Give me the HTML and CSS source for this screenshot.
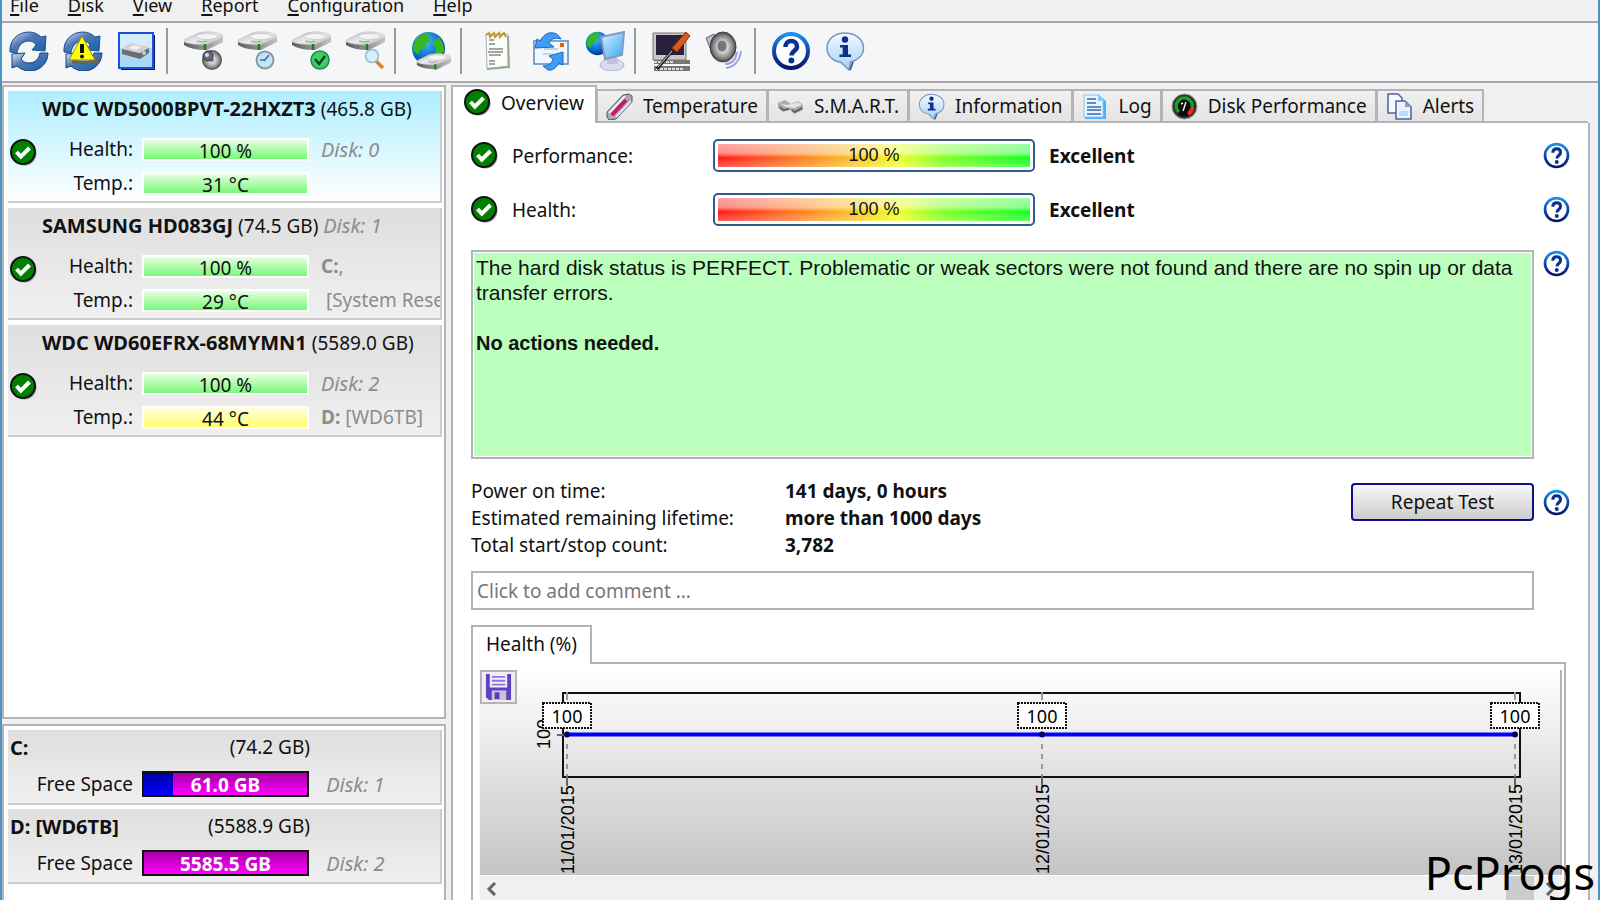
FILE: index.html
```html
<!DOCTYPE html>
<html lang="en">
  <head>
    <meta charset="UTF-8" />
    <meta name="viewport" content="width=device-width, initial-scale=1.0" />
    <title>Hard Disk Sentinel</title>
    <link rel="stylesheet" href="styles.css">
  </head>
  <body>
    <!-- shared icons -->
    <svg class="defs" width="0" height="0">
      <defs>
        <linearGradient id="gBlue" x1="0" y1="0" x2="1" y2="1">
          <stop offset="0" stop-color="#dfe8f8" />
          <stop offset="0.4" stop-color="#5078b4" />
          <stop offset="1" stop-color="#1060b0" />
        </linearGradient>
        <linearGradient id="gRing" x1="0" y1="0" x2="0" y2="1">
          <stop offset="0" stop-color="#1e90f0" />
          <stop offset="0.5" stop-color="#1048a8" />
          <stop offset="1" stop-color="#08186c" />
        </linearGradient>
        <linearGradient id="gBubble" x1="0" y1="0" x2="0" y2="1">
          <stop offset="0" stop-color="#f4faff" />
          <stop offset="1" stop-color="#a4d0f8" />
        </linearGradient>
        <linearGradient id="gDisk" x1="0" y1="0" x2="1" y2="1">
          <stop offset="0" stop-color="#b4b4b4" />
          <stop offset="0.5" stop-color="#ececec" />
          <stop offset="1" stop-color="#a8a8a8" />
        </linearGradient>
        <linearGradient id="gSide" x1="0" y1="0" x2="1" y2="0">
          <stop offset="0" stop-color="#5c5c5c" />
          <stop offset="0.6" stop-color="#989898" />
          <stop offset="1" stop-color="#c4c4c4" />
        </linearGradient>
        <radialGradient id="gGlobe" cx="0.4" cy="0.3" r="0.75">
          <stop offset="0" stop-color="#50b8ff" />
          <stop offset="0.6" stop-color="#0870d0" />
          <stop offset="1" stop-color="#042c78" />
        </radialGradient>
        <radialGradient id="gSpeaker" cx="0.5" cy="0.5" r="0.5">
          <stop offset="0" stop-color="#555" />
          <stop offset="0.3" stop-color="#ddd" />
          <stop offset="0.75" stop-color="#888" />
          <stop offset="1" stop-color="#444" />
        </radialGradient>
        <linearGradient id="gScreen" x1="0" y1="0" x2="1" y2="1">
          <stop offset="0" stop-color="#d8f4ff" />
          <stop offset="1" stop-color="#38a4f0" />
        </linearGradient>
      </defs>
      <symbol id="i-check" viewBox="0 0 27 27">
        <circle cx="14.500" cy="14.500" r="12" fill="#999" />
        <circle cx="13" cy="13" r="12" fill="#008000" stroke="#111" stroke-width="2" />
        <path d="M6.500 13l4.300 4.600L19.500 9" fill="none" stroke="#fff" stroke-width="4" />
      </symbol>
      <symbol id="i-help" viewBox="0 0 40 40">
        <circle cx="20" cy="20" r="17" fill="#fff" stroke="url(#gRing)" stroke-width="4" />
        <path d="M14.500 16c0-4 2.500-6 5.700-6s5.800 2 5.800 5.500c0 4.500-5.500 4.500-5.500 9" fill="none" stroke="#0c2f92" stroke-width="4.500" />
        <circle cx="20.400" cy="29.500" r="3" fill="#0c2f92" />
      </symbol>
      <symbol id="i-info" viewBox="0 0 40 40">
        <path d="M20 2C10 2 2 8 2 17c0 8 6 13 14 14.500L24 39l1.500-8C33 29 38.500 24 38.500 17 38.500 8 30 2 20 2z" fill="url(#gBubble)" stroke="#7896bc" stroke-width="1.500" />
        <path d="M28 31l-3 8" stroke="#3c608c" stroke-width="2" />
        <circle cx="20" cy="8.500" r="3.200" fill="#0c308c" />
        <path d="M15 14h8v9.500h3V26H14.500v-2.500h3.200V16.500H15z" fill="#0c308c" />
      </symbol>
      <symbol id="i-refresh" viewBox="0 0 40 40">
        <path d="M1 21C0 9 9 1 20 1c5 0 9 2 12 5l5-1-1 15-13-1 4-5c-2-3-4-4-7-4-7 0-11 5-12 12z" fill="url(#gBlue)" stroke="#24508c" />
        <path d="M39 22c0 10-8 18-18 18-5 0-10-2-13-5l-5 2V23l13-1-4 6c2 3 5 4 8 4 6 0 10-4 11-10z" fill="url(#gBlue)" stroke="#18407c" />
      </symbol>
      <symbol id="i-disk" viewBox="0 0 40 20">
        <path d="M1 10Q10 13 22 12L40 6v5L24 19Q8 19 1 14z" fill="url(#gSide)" />
        <path d="M1 9L15 2q12-3 23 1 2 1 2 4L23 14Q9 14 1 11z" fill="url(#gDisk)" stroke="#b8b8b8" stroke-width=".5" />
        <ellipse cx="24" cy="5.500" rx="11" ry="3" fill="#f4f4f4" stroke="#c0c0c0" stroke-width=".7" />
        <path d="M14 10q6 2 10 0" fill="none" stroke="#999" />
        <path d="M22 13v6" stroke="#188018" stroke-width="2.500" />
      </symbol>
      <symbol id="i-globe" viewBox="0 0 34 34">
        <circle cx="17" cy="17" r="16" fill="url(#gGlobe)" />
        <path d="M5 8c4-5 10-7 14-6l-3 4 4 3-5 3-2 5-4 1-2 5-4-3c-2-4 0-9 2-12zM22 10l5-4c3 4 6 9 5 14l-4 4-5-4 2-4-4-2z" fill="#38b820" />
      </symbol>
    </svg>

    <nav class="menu">
      <button type="button"><u>F</u>ile</button>
      <button type="button"><u>D</u>isk</button>
      <button type="button"><u>V</u>iew</button>
      <button type="button"><u>R</u>eport</button>
      <button type="button"><u>C</u>onfiguration</button>
      <button type="button"><u>H</u>elp</button>
    </nav>

    <div class="toolbar">
      <button type="button" aria-label="Refresh">
        <svg viewBox="0 0 40 40"><use href="#i-refresh" /></svg>
      </button>
      <button type="button" aria-label="Refresh all">
        <svg viewBox="0 0 40 40">
          <use href="#i-refresh" />
          <path d="M9 31h25l-2-4" fill="none" stroke="#665" stroke-width="3" />
          <path d="M19 5L32 29H6z" fill="#ffff00" stroke="#8c8c20" stroke-width="1" />
          <path d="M19 13v9" stroke="#111" stroke-width="4" />
          <circle cx="19" cy="25.500" r="2" fill="#111" />
        </svg>
      </button>
      <button type="button" aria-label="Disk info">
        <svg viewBox="0 0 40 40">
          <rect x="4" y="4" width="34" height="35" fill="#081858" />
          <rect x="2" y="2" width="34" height="35" fill="#a8d8f8" stroke="#1c50dc" stroke-width="2" />
          <rect x="3" y="3" width="32" height="14" fill="#fff" opacity=".5" />
          <path d="M5 18l7 1 11 3 9-5v5l-9 6-18-5z" fill="#6c6c6c" />
          <path d="M5 18l9-6 18 4-10 6z" fill="#d0d0d0" />
          <path d="M11 17l6-3 8 2-6 3z" fill="#f0f0f0" />
          <circle cx="27" cy="22" r="2" fill="#ccc" />
        </svg>
      </button>
      <span class="sep"></span>
      <button type="button" aria-label="Acoustic">
        <svg viewBox="0 0 40 40">
          <use href="#i-disk" width="40" height="20" />
          <circle cx="29" cy="29" r="10" fill="url(#gSpeaker)" />
          <circle cx="25" cy="25" r="5" fill="#667" stroke="#334" />
          <circle cx="24" cy="24" r="2" fill="#dde" />
        </svg>
      </button>
      <button type="button" aria-label="Disk time">
        <svg viewBox="0 0 40 40">
          <use href="#i-disk" width="40" height="20" />
          <circle cx="28" cy="29" r="8.500" fill="#c0e4f8" stroke="#8c98a0" stroke-width="2" />
          <path d="M27 30l5-6M23 29h5" stroke="#4c6c90" stroke-width="1.500" />
        </svg>
      </button>
      <button type="button" aria-label="Disk test">
        <svg viewBox="0 0 40 40">
          <use href="#i-disk" width="40" height="20" />
          <circle cx="29" cy="29" r="9" fill="#40cc68" stroke="#189040" stroke-width="1.500" />
          <path d="M24 28l4 5 6-8" fill="none" stroke="#0c4820" stroke-width="2.500" />
        </svg>
      </button>
      <button type="button" aria-label="Surface test">
        <svg viewBox="0 0 40 40">
          <use href="#i-disk" width="40" height="20" />
          <path d="M31 30l7 7" stroke="#d88820" stroke-width="3.500" />
          <circle cx="27" cy="25" r="6.500" fill="#d4f0ff" stroke="#9cb4d0" stroke-width="1.500" />
        </svg>
      </button>
      <span class="sep"></span>
      <button type="button" aria-label="Online">
        <svg viewBox="0 0 40 40">
          <use href="#i-globe" x="0" y="0" width="35" height="35" />
          <use href="#i-disk" x="5" y="21" width="35" height="19" />
        </svg>
      </button>
      <span class="sep"></span>
      <button type="button" aria-label="Report">
        <svg viewBox="0 0 40 40">
          <path d="M9 3h22v32L10 38z" fill="#fcfcf8" stroke="#a4b4a4" />
          <path d="M31 5l1 31-22 2" fill="none" stroke="#98a898" stroke-width="2" />
          <path d="M9 4l3-2 1 4 4-4 1 4 4-4 1 4 4-4 2 4" fill="none" stroke="#c49830" stroke-width="2" />
          <path d="M12 9h5M12 13h6M12 18h14M11 21h15M12 24h12M12 30h6M12 33h6" stroke="#888" stroke-width="1.500" />
        </svg>
      </button>
      <button type="button" aria-label="Send mail">
        <svg viewBox="0 0 40 40">
          <path d="M3 10h34v23H3z" fill="#f0f8ff" stroke="#5888c0" stroke-width="1.500" />
          <path d="M13 18h14M12 23h10" stroke="#b0c4d8" stroke-width="1.500" />
          <rect x="29" y="12" width="4" height="4" fill="#e06020" />
          <path d="M4 17L6 8l3 2C13 3 18 1 22 2c4 0 6 3 8 6-6-2-10 0-12 4l5 4z" fill="#3c9cf8" stroke="#1c64c0" />
          <path d="M32 21v13l-4-2c-3 5-7 8-11 7l-5-4c6 0 9-3 10-7l-4-3z" fill="#3c9cf8" stroke="#1c64c0" />
        </svg>
      </button>
      <button type="button" aria-label="Network">
        <svg viewBox="0 0 40 40">
          <use href="#i-globe" x="0" y="0" width="25" height="25" />
          <ellipse cx="27" cy="34" rx="12" ry="6" fill="#dcdcf0" stroke="#b0b0d0" />
          <path d="M23 24h9l1 9H22z" fill="#c0c0e0" />
          <path d="M16 6l23-5-2 23-17 4z" fill="url(#gScreen)" stroke="#8498c4" stroke-width="2" />
        </svg>
      </button>
      <span class="sep"></span>
      <button type="button" aria-label="Configure">
        <svg viewBox="0 0 40 40">
          <path d="M2 2h33v27H2z" fill="#c8c8c8" stroke="#777" />
          <path d="M5 4h28v20H5z" fill="#28203c" />
          <path d="M3 29h36v4H3zM3 35h36v5H3z" fill="#777" />
          <path d="M3 31h20M5 38h28" stroke="#ddd" stroke-width="2" stroke-dasharray="3 1" />
          <path d="M22 19L6 38" stroke="#222" stroke-width="3" />
          <path d="M21 20L7 36" stroke="#ddd" stroke-width="1" />
          <path d="M35 1l4 4-13 16-5-4z" fill="#dc5818" stroke="#8c3008" />
        </svg>
      </button>
      <button type="button" aria-label="Sound">
        <svg viewBox="0 0 40 40">
          <path d="M1 7l8-4 4 16-8-2z" fill="#bcbcd8" stroke="#667" />
          <ellipse cx="18" cy="16" rx="13" ry="15" fill="url(#gSpeaker)" stroke="#444" />
          <ellipse cx="17" cy="15" rx="5" ry="6" fill="#777" stroke="#ccc" />
          <path d="M20 33c7 0 11-5 12-12M21 37c8-1 14-7 15-17" fill="none" stroke="#a0a0dc" stroke-width="2" />
        </svg>
      </button>
      <span class="sep"></span>
      <button type="button" aria-label="Help">
        <svg viewBox="0 0 40 40"><use href="#i-help" /></svg>
      </button>
      <button type="button" aria-label="About">
        <svg viewBox="0 0 40 40"><use href="#i-info" /></svg>
      </button>
    </div>

    <div class="window">
      <aside class="sidebar">
        <section class="panel disks">
          <div class="item selected">
            <p class="disk-title"><b>WDC WD5000BPVT-22HXZT3</b> (465.8 GB)</p>
            <div class="row">
              <svg class="status"><use href="#i-check" /></svg>
              <span class="label">Health:</span>
              <span class="bar">100 %</span>
              <i class="note">Disk: 0</i>
            </div>
            <div class="row">
              <span></span>
              <span class="label">Temp.:</span>
              <span class="bar">31 °C</span>
            </div>
          </div>
          <div class="item">
            <p class="disk-title"><b>SAMSUNG HD083GJ</b> (74.5 GB) <i class="note">Disk: 1</i></p>
            <div class="row">
              <svg class="status"><use href="#i-check" /></svg>
              <span class="label">Health:</span>
              <span class="bar">100 %</span>
              <span class="note"><b>C:</b>,</span>
            </div>
            <div class="row">
              <span></span>
              <span class="label">Temp.:</span>
              <span class="bar">29 °C</span>
              <span class="note">&nbsp;[System Reserved]</span>
            </div>
          </div>
          <div class="item">
            <p class="disk-title"><b>WDC WD60EFRX-68MYMN1</b> (5589.0 GB)</p>
            <div class="row">
              <svg class="status"><use href="#i-check" /></svg>
              <span class="label">Health:</span>
              <span class="bar">100 %</span>
              <i class="note">Disk: 2</i>
            </div>
            <div class="row">
              <span></span>
              <span class="label">Temp.:</span>
              <span class="bar warm">44 °C</span>
              <span class="note"><b>D:</b> [WD6TB]</span>
            </div>
          </div>
        </section>

        <section class="panel drives">
          <div class="item">
            <p class="drive-title"><b>C:</b><span>(74.2 GB)</span></p>
            <div class="row">
              <span class="label wide">Free Space</span>
              <span class="bar space"><span class="used" style="width: 18%"></span><b>61.0 GB</b></span>
              <i class="note">&nbsp;Disk: 1</i>
            </div>
          </div>
          <div class="item">
            <p class="drive-title"><b>D: [WD6TB]</b><span>(5588.9 GB)</span></p>
            <div class="row">
              <span class="label wide">Free Space</span>
              <span class="bar space"><b>5585.5 GB</b></span>
              <i class="note">&nbsp;Disk: 2</i>
            </div>
          </div>
        </section>
      </aside>

      <main class="main">
        <div class="tabs" role="tablist">
          <button class="tab active" type="button" role="tab" aria-selected="true">
            <svg viewBox="0 0 27 27"><use href="#i-check" /></svg>Overview
          </button>
          <button class="tab" type="button" role="tab">
            <svg viewBox="0 0 27 27">
              <path d="M1 19L17 2l6-1 3 2v6L10 26l-7 1-2-3z" fill="#a8a8b4" stroke="#555" />
              <path d="M3 20L19 3" stroke="#f0f0f4" stroke-width="2" />
              <path d="M6 22L20 7" stroke="#c81870" stroke-width="4" />
              <path d="M10 24L25 8" stroke="#e4e4ec" stroke-width="2" />
            </svg>Temperature
          </button>
          <button class="tab" type="button" role="tab">
            <svg viewBox="0 0 27 27">
              <path d="M1 10l7-3 6 4 7-3 5 4v5l-9 4-4-4-7 2-5-4z" fill="#aaa" />
              <path d="M2 10l7 2 6-1 6-2 4 3-8 3-8-1z" fill="#e4e4e4" />
              <path d="M3 14l3 3 6-1M15 17l3 2 7-4" fill="none" stroke="#555" stroke-width="1.500" />
            </svg>S.M.A.R.T.
          </button>
          <button class="tab" type="button" role="tab">
            <svg viewBox="0 0 27 27"><use href="#i-info" /></svg>Information
          </button>
          <button class="tab" type="button" role="tab">
            <svg viewBox="0 0 27 27">
              <path d="M3 3h15l6 5v18H3z" fill="#48b0fc" />
              <path d="M2 2h15l4 5v17H2z" fill="#e8f6ff" stroke="#80c4f8" />
              <path d="M16 1v7h7z" fill="#88ccfc" />
              <path d="M5 6h9M5 10h9M5 14h14M5 17h14M5 21h14" stroke="#3c64b0" stroke-width="1.500" />
            </svg>Log
          </button>
          <button class="tab" type="button" role="tab">
            <svg viewBox="0 0 27 27">
              <circle cx="13.500" cy="13.500" r="12.500" fill="#333" stroke="#999" />
              <circle cx="13.500" cy="13.500" r="10" fill="#0c0c0c" />
              <path d="M8 19a8 8 0 1 1 13-4" fill="none" stroke="#10a820" stroke-width="3.500" />
              <path d="M21 15c0 3-2 5-4 6" fill="none" stroke="#e82c18" stroke-width="4" />
              <path d="M12 18l3-9M10 11l2-1" stroke="#eee" stroke-width="1.500" />
            </svg>Disk Performance
          </button>
          <button class="tab" type="button" role="tab">
            <svg viewBox="0 0 27 27">
              <path d="M2 1h10l4 4v15H2z" fill="#f4faff" stroke="#4c60a0" stroke-width="1.500" />
              <path d="M10 8h9l6 6v12H10z" fill="#e8f4ff" stroke="#4c60a0" stroke-width="1.500" />
              <path d="M19 8v6h6z" fill="#88a0d0" />
              <path d="M13 18h9v5h-9z" fill="#b8dcf8" />
            </svg>Alerts
          </button>
        </div>

        <div class="content">
          <div class="score">
            <svg class="status"><use href="#i-check" /></svg>
            <span class="score-label">Performance:</span>
            <div class="gauge"><span>100 %</span></div>
            <b>Excellent</b>
            <button class="help" type="button" aria-label="Help"><svg viewBox="0 0 40 40"><use href="#i-help" /></svg></button>
          </div>
          <div class="score">
            <svg class="status"><use href="#i-check" /></svg>
            <span class="score-label">Health:</span>
            <div class="gauge"><span>100 %</span></div>
            <b>Excellent</b>
            <button class="help" type="button" aria-label="Help"><svg viewBox="0 0 40 40"><use href="#i-help" /></svg></button>
          </div>

          <div class="with-help">
            <div class="summary">
              <p>The hard disk status is PERFECT. Problematic or weak sectors were not found and there are no spin up or data transfer errors.</p>
              <p><b>No actions needed.</b></p>
            </div>
            <button class="help" type="button" aria-label="Help"><svg viewBox="0 0 40 40"><use href="#i-help" /></svg></button>
          </div>

          <div class="facts">
            <dl>
              <dt>Power on time:</dt>
              <dd>141 days, 0 hours</dd>
              <dt>Estimated remaining lifetime:</dt>
              <dd>more than 1000 days</dd>
              <dt>Total start/stop count:</dt>
              <dd>3,782</dd>
            </dl>
            <div class="repeat">
              <button class="repeat-button" type="button">Repeat Test</button>
              <button class="help" type="button" aria-label="Help"><svg viewBox="0 0 40 40"><use href="#i-help" /></svg></button>
            </div>
          </div>

          <input class="comment" type="text" placeholder="Click to add comment ..." aria-label="Comment" />

          <div class="chart-tabs">
            <button class="chart-tab" type="button">Health (%)</button>
          </div>
          <div class="chart">
            <div class="plot">
              <button class="save" type="button" aria-label="Save">
                <svg viewBox="0 0 30 30">
                  <path d="M2 1h26v27H5l-3-3z" fill="#6040c4" />
                  <path d="M6 1h18v14H6z" fill="#f4f0ff" />
                  <path d="M8 4h14M8 8h14M8 12h14" stroke="#8c74dc" stroke-width="2" />
                  <path d="M8 18h15v10H8z" fill="#c8c4dc" />
                  <path d="M11 20h5v7h-5z" fill="#5c38bc" />
                </svg>
              </button>
              <svg class="graph" viewBox="0 -2 1080 205">
                <rect x="83" y="21" width="957" height="84" fill="none" stroke="#111" stroke-width="2" />
                <g stroke="#999" stroke-width="2">
                  <path d="M87 20v8M562 20v8M1035 20v8" />
                  <path d="M87 72v32M562 72v32M1035 72v32" stroke-dasharray="5 5" />
                  <path d="M77 63h8M87 104v10M562 104v10M1035 104v10" stroke="#666" />
                </g>
                <text class="axis" transform="translate(70 77) rotate(-90)">100</text>
                <path d="M87 62.500H1035" stroke="#0000ff" stroke-width="4" />
                <g fill="#00005c">
                  <circle cx="87" cy="62.500" r="3" />
                  <circle cx="562" cy="62.500" r="3" />
                  <circle cx="1035" cy="62.500" r="3" />
                </g>
                <g fill="#fff" stroke="#111" stroke-width="2" stroke-dasharray="2 1">
                  <rect x="63" y="31" width="48" height="25" />
                  <rect x="538" y="31" width="48" height="25" />
                  <rect x="1011" y="31" width="48" height="25" />
                </g>
                <g class="value" text-anchor="middle">
                  <text x="87" y="51">100</text>
                  <text x="562" y="51">100</text>
                  <text x="1035" y="51">100</text>
                </g>
                <g class="axis">
                  <text transform="translate(94 202) rotate(-90)">11/01/2015</text>
                  <text transform="translate(569 202) rotate(-90)">12/01/2015</text>
                  <text transform="translate(1042 202) rotate(-90)">13/01/2015</text>
                </g>
              </svg>
            </div>
            <div class="scrollbar">
              <svg viewBox="0 0 12 14"><path d="M9 1L3 7l6 6" /></svg>
              <span class="thumb"></span>
              <svg viewBox="0 0 12 14"><path d="M3 1l6 6-6 6" /></svg>
            </div>
          </div>
        </div>
      </main>
    </div>

    <div class="watermark">PcProgs</div>
  </body>
</html>
```
FILE: styles.css
```css
:root {
  --window: #f0f0f0;
  --line: #b4b4b8;
  --note: #8c8c8c;
  --edge: #4c94c0;
  --sm: 18px;
  --md: 19px;
  --lg: 20px;
}
* {
  box-sizing: border-box;
}
body {
  margin: 0;
  height: 100vh;
  overflow: hidden;
  display: flex;
  flex-direction: column;
  border-left: 2px solid var(--edge);
  border-right: 2px solid var(--edge);
  background-color: var(--window);
  color: #111;
  font-family: "Noto Sans", sans-serif;
  font-size: var(--md);
}
p,
dl,
dd {
  margin: 0;
}
button {
  margin: 0;
  padding: 0;
  border: 0;
  background: none;
  color: inherit;
  font: inherit;
}
.defs {
  position: absolute;
}
.menu {
  flex: none;
  display: flex;
  height: 23px;
  padding-bottom: 11px;
  align-items: center;
  border-bottom: 2px solid #a8a8a8;
  font-size: var(--sm);
}
.menu button {
  padding: 0 15px 0 14px;
  line-height: 10px;
}
.menu button:first-child {
  padding-left: 8px;
}
.menu u {
  text-decoration-thickness: 2px;
  text-underline-offset: 2px;
}
.toolbar {
  flex: none;
  display: flex;
  align-items: center;
  height: 60px;
  padding-bottom: 2px;
  background-color: #f5f6f8;
  border-bottom: 2px solid #a8a8a8;
}
.toolbar button {
  width: 54px;
  height: 40px;
}
.toolbar svg {
  width: 40px;
  height: 40px;
  display: block;
  margin: 0 auto;
}
.sep {
  width: 2px;
  height: 46px;
  margin: 0 8px 0 2px;
  background-color: #999;
}
.window {
  flex: 1;
  min-height: 0;
  display: flex;
  gap: 5px;
  padding: 2px 8px 0 0;
}
.sidebar {
  width: 444px;
  display: flex;
  flex-direction: column;
  gap: 5px;
}
.panel {
  background-color: #fff;
  border: 2px solid var(--line);
  padding: 4px 2px 0 4px;
}
.disks {
  flex: 1;
}
.drives {
  height: 176px;
  border-bottom: 0;
}
.item {
  padding-left: 2px;
  overflow: hidden;
  white-space: nowrap;
  background: linear-gradient(#dedede, #f0f0f0);
  border-right: 2px solid #ccc;
  border-bottom: 2px solid #ccc;
}
.disks .item {
  height: 112px;
  margin-bottom: 5px;
}
.drives .item {
  height: 75px;
  margin-bottom: 4px;
}
.item.selected {
  background: linear-gradient(#aeeeff, #fff);
}
.disk-title {
  height: 41px;
  padding-left: 32px;
  line-height: 36px;
}
.disk-title b,
.drive-title b,
.item i {
  font-size: var(--lg);
}
.drive-title {
  display: flex;
  justify-content: space-between;
  width: 300px;
  height: 37px;
  line-height: 35px;
}
.row {
  display: grid;
  grid-template-columns: 27px 87px 167px 1fr;
  column-gap: 9px;
  align-items: center;
  height: 34px;
  line-height: 33px;
}
.status {
  width: 27px;
  height: 27px;
}
.row .status {
  align-self: end;
}
.label {
  text-align: right;
}
.label.wide {
  grid-column: 1 / 3;
}
.note {
  color: var(--note);
}
.row .note {
  padding-left: 3px;
}
.bar {
  height: 23px;
  line-height: 22px;
  text-align: center;
  border: 2px solid #fff;
  background: linear-gradient(#e8ffe0, #78f878);
}
.bar.warm {
  background: linear-gradient(#ffffe0, #ffff70);
}
.bar.space {
  position: relative;
  height: 26px;
  line-height: 24px;
  border-color: #111;
  color: #fff;
  background: linear-gradient(#a800a8, #ff00ff);
}
.bar.space b {
  position: relative;
}
.used {
  position: absolute;
  top: 0;
  bottom: 0;
  left: 0;
  background: linear-gradient(#0000a0, #0000ff);
}
.main {
  flex: 1;
  min-width: 0;
  display: flex;
  flex-direction: column;
}
.tabs {
  flex: none;
  display: flex;
  align-items: flex-end;
  height: 38px;
}
.tab {
  display: flex;
  align-items: center;
  gap: 10px;
  height: 34px;
  padding: 0 8px;
  background: linear-gradient(#f0f0f0, #e4e4e4);
  border: 2px solid var(--line);
  border-left-width: 1px;
  white-space: nowrap;
}
.tab svg {
  width: 27px;
  height: 27px;
}
.tab.active {
  position: relative;
  height: 38px;
  padding: 0 11px 5px;
  background: #fff;
  border-left-width: 2px;
  border-bottom: 0;
}
.content {
  flex: 1;
  min-height: 0;
  display: flex;
  flex-direction: column;
  padding: 16px 18px 0;
  background-color: #fff;
  border-left: 2px solid var(--line);
  border-right: 2px solid var(--line);
  position: relative;
}
/* top edge, open under the active tab */
.content::before {
  content: "";
  position: absolute;
  top: -2px;
  left: 144px;
  right: 0;
  height: 2px;
  background-color: var(--line);
}
.score {
  flex: none;
  display: flex;
  align-items: center;
  height: 33px;
  margin-bottom: 21px;
}
.score-label {
  width: 201px;
  margin-left: 14px;
}
.score b {
  flex: 1;
  margin-left: 14px;
}
.help {
  flex: none;
  width: 27px;
  height: 27px;
}
.help svg {
  display: block;
  width: 27px;
  height: 27px;
}
.gauge {
  width: 322px;
  height: 33px;
  padding: 3px;
  border: 2px solid #305c8c;
  border-radius: 5px;
}
.gauge span {
  display: block;
  height: 23px;
  line-height: 22px;
  text-align: center;
  font-family: "Liberation Sans", sans-serif;
  font-size: var(--sm);
  background: linear-gradient(rgba(255, 255, 255, 0.6), rgba(255, 255, 255, 0.5) 40%, rgba(255, 255, 255, 0) 60%, rgba(255, 255, 255, 0.3)),
    linear-gradient(90deg, #ff1818, #ff8c20 30%, #f0ff20 58%, #80ff20 72%, #10ff20);
}
.with-help {
  flex: none;
  display: flex;
  gap: 9px;
  align-items: flex-start;
  margin-top: 3px;
}
.summary {
  flex: 1;
  height: 209px;
  padding: 3px;
  line-height: 25px;
  font-family: "Liberation Sans", sans-serif;
  font-size: 21px;
  background-color: #bcffbc;
  border: 2px solid var(--line);
  box-shadow: inset 0 0 0 1px #fff;
}
.summary b {
  font-size: var(--lg);
}
.summary p + p {
  margin-top: 25px;
}
.facts {
  flex: none;
  display: flex;
  justify-content: space-between;
  margin-top: 19px;
}
.facts dl {
  display: grid;
  grid-template-columns: 314px auto;
  line-height: 27px;
}
.facts dd {
  font-weight: bold;
}
.repeat {
  display: flex;
  gap: 9px;
  align-items: center;
  height: 38px;
  margin-top: 5px;
}
.repeat-button {
  width: 183px;
  height: 38px;
  background: linear-gradient(#f8f8f8, #ccc);
  border: 2px solid #101088;
  border-radius: 4px;
}
.comment {
  flex: none;
  height: 39px;
  margin: 12px 36px 0 0;
  padding: 0 4px;
  border: 2px solid var(--line);
  font: inherit;
}
.comment::placeholder {
  color: #777;
}
.chart-tabs {
  flex: none;
  display: flex;
  margin-top: 15px;
}
.chart-tab {
  position: relative;
  width: 121px;
  height: 39px;
  margin-bottom: -2px;
  padding-bottom: 4px;
  background: #fff;
  border: 2px solid var(--line);
  border-bottom: 0;
}
.chart {
  flex: 1;
  min-height: 0;
  margin-right: 4px;
  padding: 6px 2px 0 7px;
  border: 2px solid var(--line);
  border-bottom: 0;
}
.plot {
  position: relative;
  background: linear-gradient(#fff, #c4c4c4);
  border-right: 2px solid var(--line);
}
.save {
  position: absolute;
  width: 37px;
  height: 34px;
  background-color: #eee;
  border: 2px solid var(--line);
}
.save svg {
  display: block;
  width: 29px;
  height: 29px;
  margin: auto;
}
.graph {
  display: block;
  width: 100%;
}
.axis {
  font-family: "Liberation Sans", sans-serif;
  font-size: var(--sm);
}
.value {
  font-size: var(--sm);
}
.scrollbar {
  display: flex;
  align-items: center;
  height: 26px;
  margin-top: 1px;
  padding: 0 6px;
  background-color: #f0f0f0;
}
.scrollbar svg {
  width: 12px;
  height: 14px;
  fill: none;
  stroke: #666;
  stroke-width: 3;
}
.thumb {
  width: 28px;
  height: 26px;
  margin: 0 10px 0 auto;
  background-color: #ccc;
}
.watermark {
  position: absolute;
  right: 5px;
  bottom: -3px;
  line-height: 60px;
  font-size: 45px;
  color: #000;
}
```
